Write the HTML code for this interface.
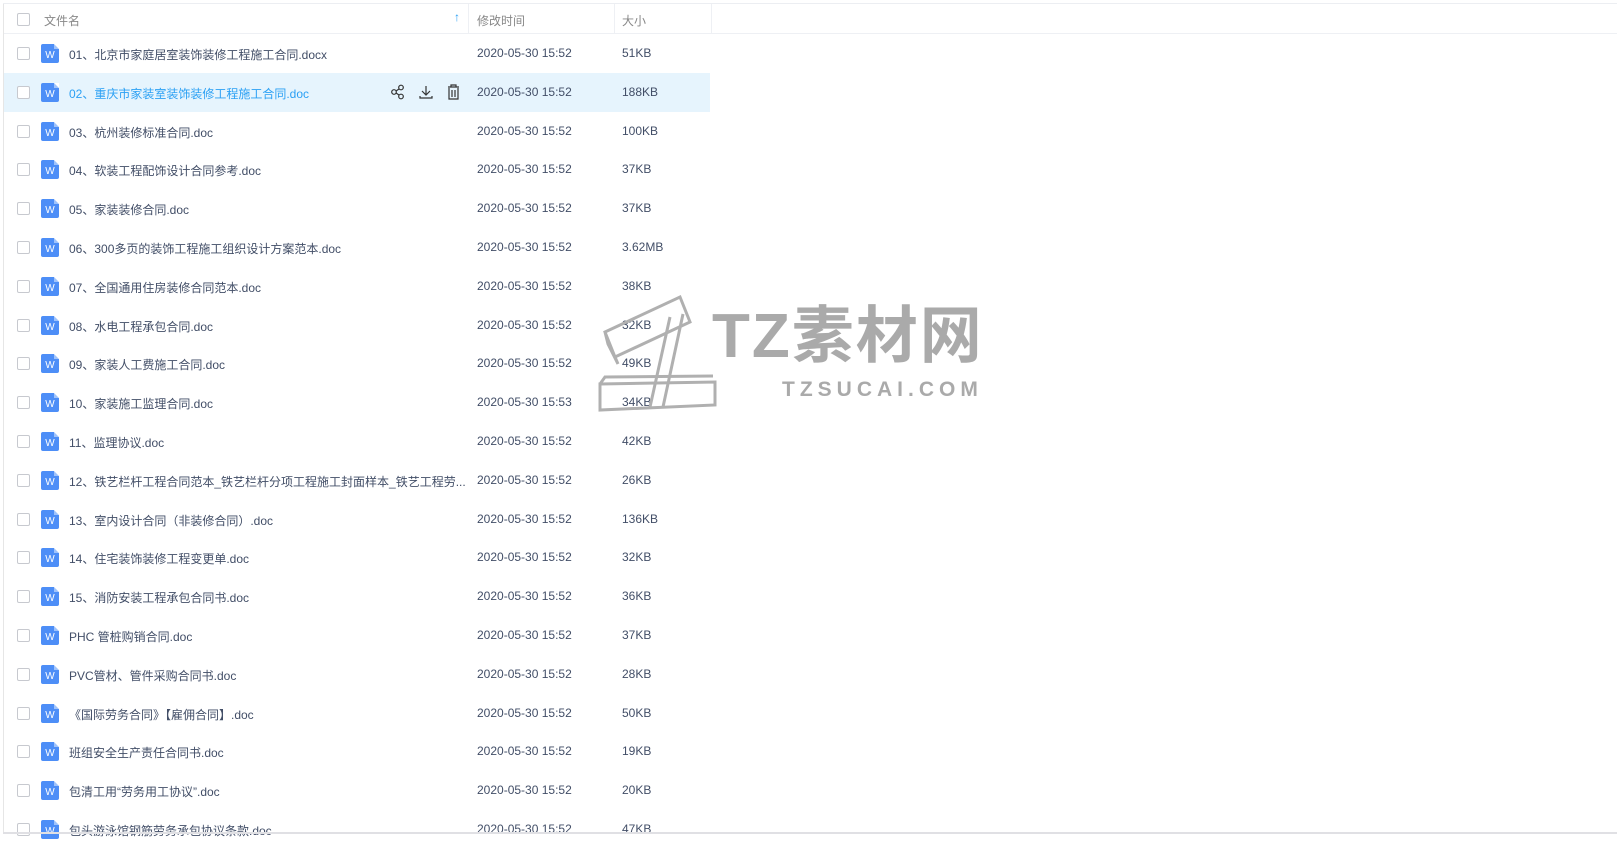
<!DOCTYPE html><html><head><meta charset="utf-8"><style>
body{margin:0;width:1617px;height:863px;background:#fff;overflow:hidden;font-family:"Liberation Sans","Noto Sans CJK SC",sans-serif;font-size:12px;color:#424e67;position:relative}
.lb{position:absolute;left:3px;top:4px;width:1px;height:829px;background:#e6e6e6}
.tb{position:absolute;left:3px;top:3px;width:1614px;height:1px;background:#eceef2}
.bb{position:absolute;left:3px;top:832px;width:1614px;height:2px;background:#e0e0e4}
.hd{position:absolute;left:4px;top:4px;width:1613px;height:29px;border-bottom:1px solid #eef0f4}
.hd span{position:absolute;top:8px;color:#888}
.vs{position:absolute;top:4px;width:1px;height:29px;background:#eef0f4}
.cb{position:absolute;left:17px;width:11px;height:11px;border:1px solid #c7c9cf;border-radius:2px;background:#fff}
.row{position:absolute;left:4px;width:706px;height:39px}
.row.h{background:#e6f4fd}
.ic{position:absolute;left:37px;top:10px;width:18px;height:19px;background:#4d8ef7;border-radius:2px}
.ic b{position:absolute;left:0;right:0;top:6px;text-align:center;color:#fff;font-size:10px;font-weight:normal;line-height:11px}
.ic:after{content:"";position:absolute;right:0;top:0;border-style:solid;border-width:0 5px 5px 0;border-color:#fff #fff #9fc3fb #9fc3fb}
.row .cb{left:13px;top:13px}
.n{position:absolute;left:65px;top:12px;white-space:nowrap}
.t{position:absolute;left:473px;top:12px}
.s{position:absolute;left:618px;top:12px}
.h .n{color:#2ba0f4}
.wm{position:absolute;color:#aaa}
</style></head><body>
<div class="tb"></div><div class="lb"></div>
<div class="hd"><span style="left:40px">文件名</span><span style="left:450px;color:#2ba0f4;font-weight:bold;top:6px">↑</span><span style="left:473px">修改时间</span><span style="left:618px">大小</span></div>
<div class="vs" style="left:468px"></div><div class="vs" style="left:614px"></div><div class="vs" style="left:711px"></div>
<div class="cb" style="top:13px"></div>
<div id="rows"></div>
<div class="bb"></div>
<svg class="wm" style="left:595px;top:292px" width="125" height="125" viewBox="0 0 125 125" fill="none" stroke="#b0b0b0" stroke-width="3"><path d="M10 40 L85 5 L95 30 L20 65 Z M10 40 L13 52 L23 72 L20 65"/><path d="M75 25 L55 115 M88 22 L68 115"/><path d="M5 92 L120 90 L120 113 L5 118 Z M5 92 L10 85 L118 84"/></svg>
<div class="wm" style="left:712px;top:304px;font-size:62px;font-weight:bold;letter-spacing:2px;line-height:66px">TZ素材网</div>
<div class="wm" style="left:782px;top:378px;font-size:21px;font-weight:bold;letter-spacing:5px">TZSUCAI.COM</div>
<script>
var d=[["01、北京市家庭居室装饰装修工程施工合同.docx","51KB"],["02、重庆市家装室装饰装修工程施工合同.doc","188KB"],["03、杭州装修标准合同.doc","100KB"],["04、软装工程配饰设计合同参考.doc","37KB"],["05、家装装修合同.doc","37KB"],["06、300多页的装饰工程施工组织设计方案范本.doc","3.62MB"],["07、全国通用住房装修合同范本.doc","38KB"],["08、水电工程承包合同.doc","32KB"],["09、家装人工费施工合同.doc","49KB"],["10、家装施工监理合同.doc","34KB"],["11、监理协议.doc","42KB"],["12、铁艺栏杆工程合同范本_铁艺栏杆分项工程施工封面样本_铁艺工程劳...","26KB"],["13、室内设计合同（非装修合同）.doc","136KB"],["14、住宅装饰装修工程变更单.doc","32KB"],["15、消防安装工程承包合同书.doc","36KB"],["PHC 管桩购销合同.doc","37KB"],["PVC管材、管件采购合同书.doc","28KB"],["《国际劳务合同》【雇佣合同】.doc","50KB"],["班组安全生产责任合同书.doc","19KB"],["包清工用“劳务用工协议”.doc","20KB"],["包头游泳馆钢筋劳务承包协议条款.doc","47KB"]];
var h="";d.forEach(function(r,i){var top=34+i*38.8;h+='<div class="row'+(i==1?' h':'')+'" style="top:'+top+'px"><div class="cb"></div><div class="ic"><b>W</b></div><div class="n">'+r[0]+'</div><div class="t">2020-05-30 15:5'+(i==9?3:2)+'</div><div class="s">'+r[1]+'</div>'+(i==1?'<svg style="position:absolute;left:386px;top:11px" width="70" height="16" viewBox="0 0 70 16" fill="none" stroke="#333" stroke-width="1.2"><circle cx="4" cy="8" r="2.3"/><circle cx="11" cy="3.5" r="2.3"/><circle cx="11" cy="12.5" r="2.3"/><path d="M6 7 L9 5 M6 9 L9 11"/><path d="M36 2 V10 M32 7 L36 11 L40 7 M30 12 V14 H42 V12"/><path d="M58 3 H69 M61 3 V1 H66 V3 M59 4 V15 H68 V4 M62 6 V13 M65 6 V13"/></svg>':'')+'</div>'});
document.getElementById("rows").innerHTML=h;
</script>
</body></html>
